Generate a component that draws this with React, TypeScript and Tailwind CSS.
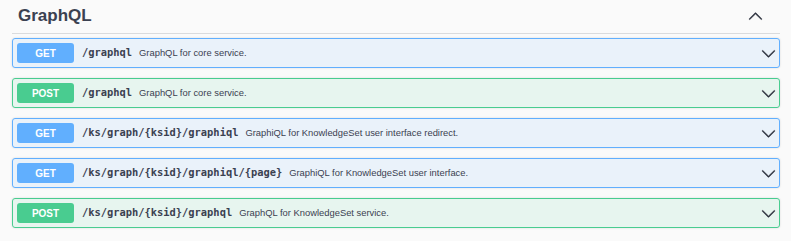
import React from 'react';

type Op = {
  method: 'GET' | 'POST';
  path: string;
  summary: string;
};

const ops: Op[] = [
  { method: 'GET', path: '/graphql', summary: 'GraphQL for core service.' },
  { method: 'POST', path: '/graphql', summary: 'GraphQL for core service.' },
  { method: 'GET', path: '/ks/graph/{ksid}/graphiql', summary: 'GraphiQL for KnowledgeSet user interface redirect.' },
  { method: 'GET', path: '/ks/graph/{ksid}/graphiql/{page}', summary: 'GraphiQL for KnowledgeSet user interface.' },
  { method: 'POST', path: '/ks/graph/{ksid}/graphql', summary: 'GraphQL for KnowledgeSet service.' },
];

function Arrow({ up }: { up?: boolean }) {
  return (
    <svg
      width="15"
      height="15"
      viewBox="0 0 20 20"
      className={up ? 'rotate-180' : ''}
      fill="#2b303c"
      stroke="#2b303c"
      strokeWidth="0.6"
    >
      <path d="M17.418 6.109c.272-.268.709-.268.979 0s.271.701 0 .969l-7.908 7.83c-.27.268-.707.268-.979 0l-7.908-7.83c-.27-.268-.27-.701 0-.969.271-.268.709-.268.979 0L10 13.25l7.418-7.141z" />
    </svg>
  );
}

function OpRow({ op }: { op: Op }) {
  const isGet = op.method === 'GET';
  return (
    <div
      className={`flex items-center h-[30px] pl-[4px] pr-[3px] border rounded-[3px] shadow-[0_0_2px_rgba(0,0,0,0.15)] ${
        isGet ? 'border-[#61affe] bg-[#61affe]/10' : 'border-[#49cc90] bg-[#49cc90]/10'
      }`}
    >
      <span
        className={`w-[57px] h-[20px] flex items-center justify-center rounded-[3px] text-white font-bold text-[10px] font-['Liberation_Sans',Arial,sans-serif] ${
          isGet ? 'bg-[#61affe]' : 'bg-[#49cc90]'
        }`}
      >
        {op.method}
      </span>
      <span className="ml-[8px] text-[10.4px] font-bold text-[#3b4151] font-['DejaVu_Sans_Mono',monospace]">
        {op.path}
      </span>
      <span className="ml-[7px] flex-1 text-[9.4px] text-[#3b4151] font-['Liberation_Sans',Arial,sans-serif]">
        {op.summary}
      </span>
      <Arrow />
    </div>
  );
}

export default function App() {
  return (
    <div className="w-[791px] h-[241px] bg-[#fafafa] pl-[12px] pr-[11px] overflow-hidden">
      <div className="flex items-center justify-between h-[34px] pb-[1px] pl-[6px] pr-[17px] border-b border-[#dadbdd]">
        <h3 className="text-[17px] font-bold text-[#3b4151] font-['Liberation_Sans',Arial,sans-serif]">
          GraphQL
        </h3>
        <Arrow up />
      </div>
      <div className="mt-[4px] flex flex-col gap-[10px]">
        {ops.map((op, i) => (
          <OpRow key={i} op={op} />
        ))}
      </div>
    </div>
  );
}
